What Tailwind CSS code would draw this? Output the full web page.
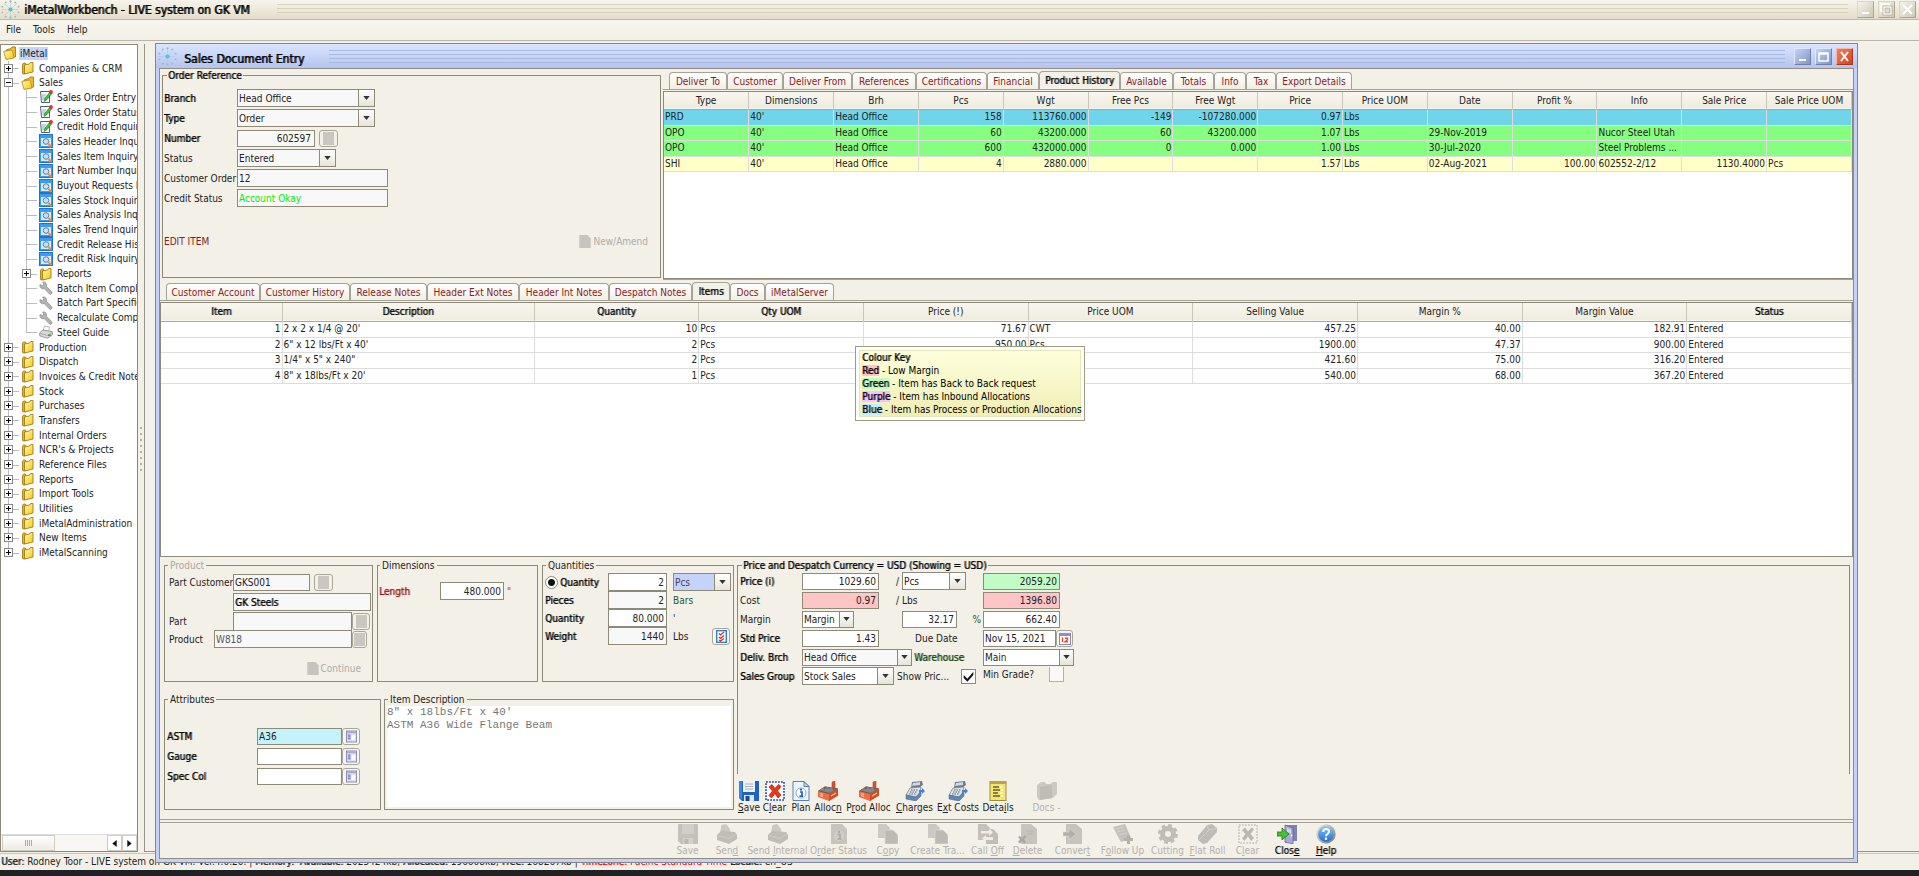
<!DOCTYPE html>
<html lang="en">
<head>
<meta charset="utf-8">
<title>iMetalWorkbench - LIVE system on GK VM</title>
<script src="https://cdn.jsdelivr.net/npm/@tailwindcss/browser@4"></script>
</head>
<body class="bg-[#f3f0e8] text-[#222] text-[10px] leading-[13px] font-['DejaVu_Sans_Condensed','DejaVu_Sans',sans-serif]">
<svg class="absolute size-0" aria-hidden="true">
  <defs>
    <linearGradient id="gFold" x1="0" y1="0" x2="1" y2="1"><stop offset="0" stop-color="#fffbb0"/><stop offset="1" stop-color="#f5c518"/></linearGradient>
    <linearGradient id="gBlue" x1="0" y1="0" x2="0" y2="1"><stop offset="0" stop-color="#8cc4f8"/><stop offset="1" stop-color="#1c6fd6"/></linearGradient>
    <linearGradient id="gRing" x1="0" y1="0" x2="1" y2="1"><stop offset="0" stop-color="#eee"/><stop offset="1" stop-color="#777"/></linearGradient>
  </defs>
  <symbol id="flake" viewBox="0 0 20 20"><g stroke="#9fd2e6" stroke-width="1" stroke-dasharray="2 1" fill="none"><path d="M10 1v18M1 10h18M3.500 3.500l13 13M16.500 3.500l-13 13"/></g><circle cx="10" cy="10" r="2.200" fill="#4fc3dc"/><g fill="#9fb6c6"><circle cx="10" cy="1.500" r="1.200"/><circle cx="10" cy="18.500" r="1.200"/><circle cx="1.500" cy="7" r="1"/><circle cx="18.500" cy="7" r="1"/><circle cx="1.500" cy="13" r="1"/><circle cx="18.500" cy="13" r="1"/><circle cx="5" cy="2.500" r="1"/><circle cx="15" cy="2.500" r="1"/><circle cx="5" cy="17.500" r="1"/><circle cx="15" cy="17.500" r="1"/></g></symbol>
  <symbol id="folder" viewBox="0 0 14 14"><path d="M1.500 3.500l1-1.500h2l.5 1v9.500l-3 .5-.5-1z" fill="#e9b21c" stroke="#9b7412" stroke-width=".8"/><path d="M3.500 4l5-1 1-1.500h2.500v9.500l-8.500 2z" fill="url(#gFold)" stroke="#a67c10" stroke-width=".9"/></symbol>
  <symbol id="folderOpen" viewBox="0 0 14 14"><path d="M3 4l5-1.500 1-1.500h3.500v10l-9 2z" fill="#f0bd2a" stroke="#a67c10" stroke-width=".9"/><path d="M.7 5.500l8-1.500.8 1.500L11 12l-8 1.500z" fill="url(#gFold)" stroke="#b58a12" stroke-width=".8"/></symbol>
  <symbol id="edit" viewBox="0 0 14 14"><path d="M1.500 1.500h9v11h-8z" fill="#fff" stroke="#555c70" stroke-width="1"/><path d="M3 5h4M3 7h3M3 9h3" stroke="#8aa4d8"/><path d="M5 11.500l1-3.500 5-6 2 1.500-5 6z" fill="#3fc23a" stroke="#187a1a" stroke-width=".6"/><circle cx="12" cy="2" r="1.900" fill="#e23030"/></symbol>
  <symbol id="inq" viewBox="0 0 14 14"><rect x=".5" y=".5" width="13" height="13" fill="#3b9cf5" stroke="#1a74d0"/><rect x="2" y="4" width="10" height="8" fill="#dcebfa"/><circle cx="7" cy="7.500" r="2.800" fill="#bfe0ff" stroke="#6d7d8c"/><path d="M9.500 10l3 3" stroke="#f08a3a" stroke-width="2"/></symbol>
  <symbol id="wrench" viewBox="0 0 14 14"><path d="M1 3.500A3.300 3.300 0 0 0 5.300 7.600l5 5.200a1.500 1.500 0 0 0 2.300-2.200L7.400 5.500A3.300 3.300 0 0 0 3.600 1L5 3 3.500 4.700z" fill="#b3b3b3" stroke="#888" stroke-width=".7"/></symbol>
  <symbol id="printerS" viewBox="0 0 14 14"><path d="M4 6l1.500-5 5 1-1 5z" fill="#fff" stroke="#999" stroke-width=".7"/><path d="M.7 8l3-3 9.600 1.500v3.500l-5 3.300-7.600-2.500z" fill="#d8d8d8" stroke="#888" stroke-width=".8"/><path d="M1 8.500l7.500 2 4.500-3.500" fill="none" stroke="#999" stroke-width=".7"/><rect x="9" y="9.500" width="3" height="1.500" fill="#45a04b"/></symbol>
  <symbol id="arrow" viewBox="0 0 8 5"><path d="M0 0h8L4 5z" fill="#333"/></symbol>
  <symbol id="doc" viewBox="0 0 14 16"><path d="M0 0h10l4 4v12H0z" fill="currentColor"/></symbol>
  <symbol id="list" viewBox="0 0 12 13"><rect x=".5" y=".5" width="11" height="12" fill="#dfe0f2" stroke="#8586b8"/><rect x="1" y="1" width="10" height="2" fill="#a9aad4"/><path d="M2 5h3M2 7h3M2 9h3" stroke="#5658a0"/><path d="M6 5h4v5H6z" fill="#fff"/></symbol>
  <symbol id="save" viewBox="0 0 20 20"><path d="M0 0h20v20H3l-3-3z" fill="#1d63c4"/><path d="M0 0h3v18L0 17z" fill="#3c85e0"/><rect x="4" y="0" width="12" height="11" fill="#eef1f6"/><path d="M6 3h8M6 5.500h8M6 8h8" stroke="#a9b2c4"/><rect x="5" y="14" width="10" height="6" fill="#dfe6f0"/><rect x="6.500" y="15" width="4" height="5" fill="#174b9a"/></symbol>
  <symbol id="saveG" viewBox="0 0 20 20"><path d="M0 1q0-1 1-1h18q1 0 1 1v18q0 1-1 1H3l-3-3z" fill="#c3c1ba"/><rect x="4" y="0" width="12" height="10" fill="#d0cec7"/><path d="M5 14h10v6H5z" fill="#d3d1ca"/><rect x="6.500" y="15" width="4" height="5" fill="#b9b7b0"/></symbol>
  <symbol id="clear" viewBox="0 0 20 20"><rect x="1" y="1" width="18" height="18" fill="#f7f8ff" stroke="#24479c" stroke-width="1.600" stroke-dasharray="1.800 1.200"/><path d="M4 6l3-2.500 3 4 3.500-4 2.500 2-3.500 4.500 3.500 4-3 3-3-4.500-3.500 4.500-2.500-2.500L7.500 10z" fill="#e8381c" stroke="#a51d08" stroke-width=".7"/></symbol>
  <symbol id="clearG" viewBox="0 0 20 20"><rect x="1" y="1" width="18" height="18" fill="none" stroke="#c6c4bd" stroke-width="1.600" stroke-dasharray="1.800 1.200"/><path d="M4 6l3-2.500 3 4 3.500-4 2.500 2-3.500 4.500 3.500 4-3 3-3-4.500-3.500 4.500-2.500-2.500L7.500 10z" fill="#bab8b1"/></symbol>
  <symbol id="plan" viewBox="0 0 20 20"><path d="M2 .5h11l5 5v14H2z" fill="#eef4fd" stroke="#5d7fb8"/><path d="M13 .5v5h5z" fill="#c2d6f3" stroke="#5d7fb8"/><circle cx="10" cy="12" r="5" fill="#fff" stroke="#8ea6cc"/><path d="M9 11h2v4M8.500 15.200h3.500" stroke="#1766d2" stroke-width="1.700" fill="none"/><circle cx="10" cy="8.700" r="1.100" fill="#1766d2"/></symbol>
  <symbol id="factory" viewBox="0 0 20 20"><path d="M14 10V1l3-.8V9z" fill="#e0512f" stroke="#9a3219" stroke-width=".5"/><path d="M0 10l7-4.500 13 2v7l-9 5.500L0 16z" fill="#f06a42"/><path d="M0 10l7-4.500 13 2L11 13z" fill="#5c5c5c"/><path d="M2 9.500l3-3 1.500 2L9 5.500l2 2.500 3-2.500 1 3 3.500-.5-7 4z" fill="#868686"/><path d="M11 13l9-5.500v7L11 20z" fill="#d84a26"/><path d="M2 12.500l3 .8M2 14.500l3 .8M13 15l5-3" stroke="#ffc9b5" stroke-width="1.200"/></symbol>
  <symbol id="till" viewBox="0 0 20 20"><path d="M7 1l10-1 1 4-3 2-9 1z" fill="#707a88"/><path d="M8 2l7-1v3l-8 1z" fill="#cfd8e2"/><path d="M5 7l11-1-2 8-4 2-9-2z" fill="#dfe4ea" stroke="#6b7480" stroke-width=".7"/><path d="M6 9h7M5 11h7M4 13h7" stroke="#59636f" stroke-width="1.200" stroke-dasharray="1.500 1"/><path d="M1 14l10 2 5-6v5l-5 5-10-2z" fill="#5f86b5" stroke="#3c5f8c" stroke-width=".5"/><path d="M14 9h3V7l3 3-3 3v-2h-3z" fill="#3a83e8"/></symbol>
  <symbol id="note" viewBox="0 0 20 20"><rect x="2" y=".5" width="16" height="19" fill="#f4e476" stroke="#a08e35"/><rect x="2" y="0" width="16" height="3" fill="#b9a546"/><path d="M5 6h6M5 9h7M5 12h5M5 15h7" stroke="#5f5f2c" stroke-width="1.300"/><path d="M12 6h3M13 9h2M12 12h3M13 15h2" stroke="#fffbd0" stroke-width="1.300"/></symbol>
  <symbol id="foldG" viewBox="0 0 20 20"><path d="M0 4l4-3h4l1 2h4l3-2h4v12l-4 4-14 2-2-3z" fill="#cbc9c2"/><path d="M3 6l12-2v13L3 19z" fill="#bfbdb6"/></symbol>
  <symbol id="printG" viewBox="0 0 20 20"><path d="M3 9l1.500-8L9 0l4 5 .5 4z" fill="#cbc9c2"/><path d="M0 11l4-4 14 1 2 3v4l-8 5-12-4z" fill="#bfbdb6"/><path d="M1 11.500l11 3 7-4.500" fill="none" stroke="#d2d0c9" stroke-width=".8"/></symbol>
  <symbol id="orderG" viewBox="0 0 20 20"><path d="M2 0h11l5 5v15H2z" fill="#c6c4bd"/><circle cx="10" cy="12" r="5" fill="#cfcdc6"/><path d="M8.500 10.500H11V15M8.500 15h4" stroke="#aaa8a1" stroke-width="1.600" fill="none"/><circle cx="10" cy="8" r="1.200" fill="#aaa8a1"/></symbol>
  <symbol id="copyG" viewBox="0 0 20 20"><path d="M0 0h8l4 4v10H0z" fill="#cbc9c2"/><path d="M7 6h8l5 5v9H7z" fill="#bcbab3" stroke="#dddbd3" stroke-width=".7"/></symbol>
  <symbol id="callG" viewBox="0 0 20 20"><path d="M0 0h8l4 4v12H0z" fill="#c4c2bb"/><path d="M8 5h7l5 5v10H8z" fill="#c0beb7"/><path d="M3 7h8V4.500l4 3.700-4 3.700V9.500H3zM15 13H8v-2l-4 3.500 4 3.500v-2h7z" fill="#eeece4"/></symbol>
  <symbol id="delG" viewBox="0 0 20 20"><path d="M3 0h10l6 5v15H3z" fill="#c6c4bd"/><path d="M0 13l2-1 2 2 3-3 1.500 1.500L6 15.500 8 18l-2 1.500L4 17l-2 2.500L0 18l2-2.500z" fill="#a9a7a0"/><path d="M8 7h7M9 10h6" stroke="#b6b4ad"/></symbol>
  <symbol id="convG" viewBox="0 0 20 20"><path d="M3 0h10l6 5v15H3z" fill="#c6c4bd"/><path d="M0 8h6V4l7 6-7 6v-4H0z" fill="#b0aea7" stroke="#d9d7cf" stroke-width=".7"/></symbol>
  <symbol id="followG" viewBox="0 0 20 20"><path d="M0 3L12 0l6 14-10 4z" fill="#c3c1ba"/><path d="M3 5l8-2M4 8l8-2M6 11l7-2" stroke="#d6d4cd"/><path d="M14 11h3v3h3v3h-3v3h-3v-3h-3v-3h3z" fill="#b3b1aa"/></symbol>
  <symbol id="gearG" viewBox="0 0 20 20"><circle cx="10" cy="10" r="5.500" fill="none" stroke="#bfbdb6" stroke-width="5"/><circle cx="10" cy="10" r="8.500" fill="none" stroke="#bfbdb6" stroke-width="3" stroke-dasharray="3.700 2.970"/></symbol>
  <symbol id="rollG" viewBox="0 0 20 20"><path d="M0 12L9 1l5-1 5 4v4L9 19l-4 1-5-4z" fill="#bdbbb4"/><path d="M9 1l2 5L1 16" fill="none" stroke="#d0cec7"/><path d="M11 6l8-2" stroke="#d0cec7"/></symbol>
  <symbol id="close" viewBox="0 0 20 20"><path d="M8 1h12v16h-3L8 19z" fill="#8080b4"/><path d="M8 1l8 3v16l-8-2z" fill="#a9a9d8" stroke="#60608f" stroke-width=".7"/><path d="M10 4l4 1.500v4L10 8z" fill="#d6d6f4"/><circle cx="14.500" cy="11.500" r="1" fill="#fff"/><path d="M0 8h5V4l7 6-7 6v-4H0z" fill="#44c234" stroke="#1c7a16" stroke-width=".8"/></symbol>
  <symbol id="help" viewBox="0 0 20 20"><circle cx="10" cy="10" r="9.700" fill="url(#gRing)"/><circle cx="10" cy="10" r="7.800" fill="url(#gBlue)"/><path d="M7.200 8q0-3 2.900-3t2.900 2.500q0 1.500-1.500 2.300T10 12.300" fill="none" stroke="#fff" stroke-width="2"/><circle cx="10" cy="14.700" r="1.300" fill="#fff"/></symbol>
  <symbol id="check" viewBox="0 0 14 14"><path d="M2.500 5.500L6 9l5.500-6.500v3L6 12 2.500 8.500z" fill="#111"/></symbol>
</svg>

<div class="h-screen flex flex-col relative overflow-hidden">
  <header class="h-[20px] shrink-0 flex items-center gap-[4px] pl-px pr-[3px] bg-linear-to-b from-[#f6f4ec] to-[#e4dec9] border-b border-[#bdb9aa]">
    <svg class="size-[19px]"><use href="#flake"/></svg>
    <h1 class="text-[12px] leading-[18px] text-black [text-shadow:1px_0_#000c] w-[249px] whitespace-nowrap">iMetalWorkbench - LIVE system on GK VM</h1>
    <div class="flex-1 h-[12px] mr-[5px] bg-[repeating-linear-gradient(to_bottom,#d6d1bf_0_1px,transparent_1px_4px)]"></div>
    <button class="size-[17px] border border-[#d9d5c4] border-r-[#aaa68f] border-b-[#aaa68f] bg-linear-to-br from-[#f5f3ea] to-[#cdc8b6]" aria-label="Minimize"><svg viewBox="0 0 15 15"><path d="M4 11h7" stroke="#fff" stroke-width="2"/></svg></button>
    <button class="size-[17px] border border-[#d9d5c4] border-r-[#aaa68f] border-b-[#aaa68f] bg-linear-to-br from-[#f5f3ea] to-[#cdc8b6]" aria-label="Restore"><svg viewBox="0 0 15 15" fill="none" stroke="#fff" stroke-width="1.500"><path d="M4 9H2V2h8v2"/><rect x="5" y="5" width="7" height="7" stroke="#8e8a78" stroke-width="2.500"/><rect x="5" y="5" width="7" height="7"/></svg></button>
    <button class="size-[17px] border border-[#d9d5c4] border-r-[#aaa68f] border-b-[#aaa68f] bg-linear-to-br from-[#f5f3ea] to-[#cdc8b6]" aria-label="Close"><svg viewBox="0 0 15 15"><path d="M3 3l9 9M12 3l-9 9" stroke="#fff" stroke-width="2"/></svg></button>
  </header>
  <nav class="h-[21px] shrink-0 flex items-center gap-[12px] pl-[6px] pb-[2px] border-b border-[#b9b6ab] bg-linear-to-b from-[#f7f5ec] to-[#f3f0e8]">
    <button>File</button><button>Tools</button><button>Help</button>
  </nav>

  <div class="flex-1 min-h-0 flex pt-[3px]">
    <aside class="w-[138px] shrink-0 mb-px border border-[#8d8a78] bg-white flex flex-col overflow-hidden">
      <ul id="tree" class="h-[514px] mt-px grid auto-rows-fr whitespace-nowrap"></ul>
      <div class="mt-auto h-[17px] flex bg-[#f8f7f3] border-t border-[#ddd]">
        <div class="w-[53px] ml-px border border-[#cfccc0] bg-linear-to-b from-white to-[#ecebe4] flex items-center justify-center gap-px"><i class="w-px h-[6px] bg-[#aaa]"></i><i class="w-px h-[6px] bg-[#aaa]"></i><i class="w-px h-[6px] bg-[#aaa]"></i><i class="w-px h-[6px] bg-[#aaa]"></i></div>
        <button class="ml-auto w-[15px] border border-[#cfccc0] bg-white flex items-center justify-center" aria-label="Scroll left"><svg viewBox="0 0 5 8" class="h-[7px] w-[5px]"><path d="M5 0v8L0 4z" fill="#111"/></svg></button>
        <button class="w-[15px] border border-[#cfccc0] bg-white flex items-center justify-center" aria-label="Scroll right"><svg viewBox="0 0 5 8" class="h-[7px] w-[5px]"><path d="M0 0v8l5-4z" fill="#111"/></svg></button>
      </div>
    </aside>
    <div class="w-[6px] shrink-0 flex flex-col items-center justify-center gap-[4px]">
      <i class="size-[2px] bg-[#b5b2a6]"></i><i class="size-[2px] bg-[#b5b2a6]"></i><i class="size-[2px] bg-[#b5b2a6]"></i><i class="size-[2px] bg-[#b5b2a6]"></i><i class="size-[2px] bg-[#b5b2a6]"></i><i class="size-[2px] bg-[#b5b2a6]"></i><i class="size-[2px] bg-[#b5b2a6]"></i><i class="size-[2px] bg-[#b5b2a6]"></i>
    </div>
    <div class="flex-1 mb-px border-l border-b border-[#96948a]"></div>
  </div>

  <footer class="h-[17px] shrink-0 pl-px pt-px whitespace-pre border-t border-[#c9c6bb] bg-[#f3f0e8]"><b class="font-normal [text-shadow:1px_0_#0009]">User:</b> Rodney Toor - LIVE system on GK VM. Ver.4.0.20. | <b class="font-normal [text-shadow:1px_0_#0009]">Memory:</b>  <b class="font-normal [text-shadow:1px_0_#0009]">Available:</b> 2025424kb, <b class="font-normal [text-shadow:1px_0_#0009]">Allocated:</b> 196608kb, <b class="font-normal [text-shadow:1px_0_#0009]">Free:</b> 168267kb | <span class="text-[#f00]"><b class="font-normal [text-shadow:1px_0_#f009]">Timezone:</b> Pacific Standard Time</span> <b class="font-normal [text-shadow:1px_0_#0009]">Locale:</b> en_US</footer>
  <div class="h-[6px] shrink-0 bg-[#202124]"></div>

  <!-- Sales Document Entry window -->
  <main class="absolute left-[155px] right-[61px] top-[43px] bottom-[13px] flex flex-col border border-[#858590] bg-[#c3d0f8] px-[3px] pb-[3px]">
    <div class="h-[24px] shrink-0 flex items-center gap-[4px] pl-[2px] pr-[4px] -mx-[3px] bg-linear-to-b from-[#dbe5ff] to-[#b4c4ef]">
      <svg class="size-[19px]"><use href="#flake"/></svg>
      <h2 class="pl-[3px] pt-[6px] text-[12px] leading-[16px] text-black [text-shadow:1px_0_#000c] w-[144px] whitespace-nowrap">Sales Document Entry</h2>
      <div class="flex-1 h-[13px] mr-[5px] bg-[repeating-linear-gradient(to_bottom,#a9badf_0_1px,transparent_1px_4px)]"></div>
      <button class="size-[17px] border border-[#dfe7ff] border-r-[#6f7fa8] border-b-[#6f7fa8] bg-linear-to-br from-[#c5d2f5] to-[#8395c3]" aria-label="Minimize window"><svg viewBox="0 0 15 15"><path d="M4 11h7" stroke="#fff" stroke-width="2"/></svg></button>
      <button class="size-[17px] border border-[#dfe7ff] border-r-[#6f7fa8] border-b-[#6f7fa8] bg-linear-to-br from-[#c5d2f5] to-[#8395c3]" aria-label="Maximize window"><svg viewBox="0 0 15 15"><path d="M3 4h9v8H3zM3 5h9" fill="none" stroke="#fff" stroke-width="1.500"/></svg></button>
      <button class="size-[17px] border border-[#f3b9a6] border-r-[#a8381c] border-b-[#a8381c] bg-linear-to-br from-[#f08060] to-[#d83c14]" aria-label="Close window"><svg viewBox="0 0 15 15"><path d="M4 3l7 9M11 3l-7 9" stroke="#fff" stroke-width="2"/></svg></button>
    </div>

    <div class="flex-1 min-h-0 flex flex-col border border-[#918e80] bg-[#f3f0e8]">
      <div class="h-[211px] shrink-0 flex gap-[2px] pl-[2px]">
        <fieldset class="w-[499px] h-[209px] shrink-0 border border-[#8d8a78] px-px">
          <legend class="ml-[3px] px-px text-black [text-shadow:1px_0_#0009]">Order Reference</legend>
          <div class="pt-[7px] flex flex-col gap-[2px]">
            <div class="flex items-center h-[18px]"><label for="branch" class="w-[73px] text-black [text-shadow:1px_0_#0009]">Branch</label>
              <div class="relative w-[138px] h-[18px]"><select id="branch" class="appearance-none w-full h-full border border-[#8d8a78] bg-[#f8f8f8] pl-px pr-[18px]"><option>Head Office</option></select><span class="absolute right-px top-px bottom-px w-[16px] border-l border-[#8d8a78] bg-linear-to-b from-white to-[#e6e4da] flex items-center justify-center pointer-events-none"><svg class="w-[7px] h-[4px]"><use href="#arrow"/></svg></span></div></div>
            <div class="flex items-center h-[18px]"><label for="type" class="w-[73px] text-black [text-shadow:1px_0_#0009]">Type</label>
              <div class="relative w-[138px] h-[18px]"><select id="type" class="appearance-none w-full h-full border border-[#8d8a78] bg-[#f8f8f8] pl-px pr-[18px]"><option>Order</option></select><span class="absolute right-px top-px bottom-px w-[16px] border-l border-[#8d8a78] bg-linear-to-b from-white to-[#e6e4da] flex items-center justify-center pointer-events-none"><svg class="w-[7px] h-[4px]"><use href="#arrow"/></svg></span></div></div>
            <div class="flex items-center h-[18px]"><label for="number" class="w-[73px] text-black [text-shadow:1px_0_#0009]">Number</label>
              <input id="number" value="602597" class="w-[78px] h-[17px] border border-[#8d8a78] bg-[#f8f8f8] text-right pr-[3px]">
              <button class="ml-[4px] w-[19px] h-[17px] rounded-[3px] border border-[#a9a698] text-[#c9c7c0] flex items-center justify-center" aria-label="Find order"><svg viewBox="0 0 11 13" class="w-[11px] h-[13px]"><rect width="11" height="13" fill="currentColor"/></svg></button></div>
            <div class="flex items-center h-[18px]"><label for="status" class="w-[73px]">Status</label>
              <div class="relative w-[99px] h-[18px]"><select id="status" class="appearance-none w-full h-full border border-[#8d8a78] bg-[#f8f8f8] pl-px pr-[18px]"><option>Entered</option></select><span class="absolute right-px top-px bottom-px w-[16px] border-l border-[#8d8a78] bg-linear-to-b from-white to-[#e6e4da] flex items-center justify-center pointer-events-none"><svg class="w-[7px] h-[4px]"><use href="#arrow"/></svg></span></div></div>
            <div class="flex items-center h-[18px]"><label for="custorder" class="w-[73px] whitespace-nowrap">Customer Order</label>
              <input id="custorder" value="12" class="w-[151px] h-[18px] border border-[#8d8a78] bg-[#f8f8f8] pl-px"></div>
            <div class="flex items-center h-[18px]"><label for="credit" class="w-[73px]">Credit Status</label>
              <input id="credit" value="Account Okay" class="w-[151px] h-[18px] border border-[#8d8a78] bg-[#f8f8f8] pl-px text-[#00f000]"></div>
          </div>
          <div class="flex items-center justify-between pt-[28px] pr-[11px]">
            <span class="text-[#8b1a1a]">EDIT ITEM</span>
            <button class="flex items-center gap-[2px] text-[#aeaca5]" disabled><svg class="w-[12px] h-[13px] text-[#c6c4bd]"><use href="#doc"/></svg>New/Amend</button>
          </div>
        </fieldset>

        <section class="flex-1 min-w-0 flex flex-col pt-[2px]">
          <div id="topTabs" role="tablist" class="h-[18px] shrink-0 flex items-end pl-[6px] whitespace-nowrap"></div>
          <div class="flex-1 border-y border-[#a5a398] pt-px">
            <div class="h-full border border-t border-[#8d8a78] bg-white">
              <table class="w-full table-fixed border-collapse whitespace-nowrap">
                <thead id="histHead" class="h-[17px] bg-linear-to-b from-[#f8f6ef] to-[#efecdf] border-b border-[#aaa89c]"></thead>
                <tbody id="histBody"></tbody>
              </table>
            </div>
          </div>
        </section>
      </div>

      <div id="midTabs" role="tablist" class="h-[20px] shrink-0 flex items-end pl-[6px] whitespace-nowrap"></div>

      <section class="relative flex-1 min-h-0 border-t border-[#a5a398] pt-px">
        <div class="h-full border border-[#8d8a78] bg-white">
          <table class="w-full table-fixed border-collapse whitespace-nowrap">
            <colgroup><col class="w-[121px]"><col class="w-[252px]"><col span="8"></colgroup>
            <thead id="itemHead" class="h-[18px] bg-linear-to-b from-[#f8f6ef] to-[#efecdf] border-b border-[#aaa89c]"></thead>
            <tbody id="itemBody"></tbody>
          </table>
        </div>
        <div role="tooltip" class="absolute left-[695px] top-[45px] border border-[#9c9e80] bg-white p-[3px] text-black whitespace-nowrap">
          <div class="w-[222px] border border-[#e6e7b8] bg-linear-to-b from-[#feffdc] to-[#f0eeb6] px-[2px]">
            <p class="[text-shadow:1px_0_#0009]">Colour Key</p>
            <p><b class="font-normal [text-shadow:1px_0_#0009] bg-[#ffc4c8]">Red</b> - Low Margin</p>
            <p><b class="font-normal [text-shadow:1px_0_#0009] bg-[#c0fcc4]">Green</b> - Item has Back to Back request</p>
            <p><b class="font-normal [text-shadow:1px_0_#0009] bg-[#f4c4fc]">Purple</b> - Item has Inbound Allocations</p>
            <p><b class="font-normal [text-shadow:1px_0_#0009] bg-[#c4eefc]">Blue</b> - Item has Process or Production Allocations</p>
          </div>
        </div>
      </section>

      <!-- Item detail -->
      <div class="h-[263px] shrink-0 flex gap-[3px] pl-[4px] pr-[3px] pt-[2px] border-b border-[#a5a398]">
        <div class="w-[570px] shrink-0 flex flex-col gap-[11px]">
          <div class="flex gap-[4px]">
            <fieldset class="w-[209px] h-[123px] border border-[#8d8a78] pl-[4px]">
              <legend class="ml-[-1px] px-[2px] text-[#a9a79f]">Product</legend>
              <div class="pt-[2px] flex items-center h-[19px]"><label for="pcust" class="w-[64px] whitespace-nowrap">Part Customer</label><input id="pcust" value="GKS001" class="w-[77px] h-[17px] border border-[#8d8a78] bg-[#f8f8f8] pl-px"><button class="ml-[4px] w-[19px] h-[17px] rounded-[3px] border border-[#a9a698] text-[#c9c7c0] flex items-center justify-center" aria-label="Find customer"><svg viewBox="0 0 11 13" class="w-[11px] h-[13px]"><rect width="11" height="13" fill="currentColor"/></svg></button></div>
              <div class="pl-[64px] pt-[2px]"><input aria-label="Customer name" value="GK Steels" class="block w-[138px] h-[18px] border border-[#8d8a78] bg-[#f8f8f8] pl-px text-black [text-shadow:1px_0_#0009]"></div>
              <div class="pt-px flex items-center h-[19px]"><label for="part" class="w-[64px]">Part</label><input id="part" class="w-[119px] h-[18px] border border-b-0 border-[#8d8a78] bg-[#f8f8f8] pl-px"><button class="w-[18px] h-[17px] rounded-[3px] border border-[#a9a698] text-[#c9c7c0] flex items-center justify-center" aria-label="Find part"><svg viewBox="0 0 11 13" class="w-[11px] h-[13px]"><rect width="11" height="13" fill="currentColor"/></svg></button></div>
              <div class="flex items-center h-[18px]"><label for="prod" class="w-[45px]">Product</label><input id="prod" value="W818" class="w-[138px] h-[18px] border border-[#8d8a78] bg-[#f8f8f8] pl-px text-[#555]"><button class="w-[15px] h-[17px] rounded-[3px] border border-[#a9a698] text-[#c9c7c0] flex items-center justify-center" aria-label="Find product"><svg viewBox="0 0 11 13" class="w-[11px] h-[13px]"><rect width="11" height="13" fill="currentColor"/></svg></button></div>
              <div class="pt-[14px] pr-[11px] flex justify-end"><button class="flex items-center gap-[2px] text-[#aeaca5]" disabled><svg class="w-[12px] h-[13px] text-[#c6c4bd]"><use href="#doc"/></svg>Continue</button></div>
            </fieldset>
            <fieldset class="w-[161px] h-[123px] border border-[#8d8a78] pl-px">
              <legend class="ml-px px-[2px]">Dimensions</legend>
              <div class="pt-[10px] flex items-center"><label for="len" class="w-[61px] text-[#a01010] [text-shadow:1px_0_#a0101099]">Length</label><input id="len" value="480.000" class="w-[64px] h-[18px] border border-[#8d8a78] bg-white text-right pr-[2px]"><span class="pl-[3px] text-[#c33]">"</span></div>
            </fieldset>
            <fieldset class="w-[192px] h-[123px] border border-[#8d8a78] pl-[2px]">
              <legend class="ml-px px-[2px]">Quantities</legend>
              <div class="pt-px flex items-center h-[19px]"><label class="w-[63px] flex items-center gap-[2px] text-black [text-shadow:1px_0_#0009]"><input type="radio" name="q" checked class="appearance-none size-[13px] rounded-full border border-[#8d8a78] bg-[radial-gradient(circle,#111_0_3px,#fff_4px)]">Quantity</label><input aria-label="Quantity ordered" value="2" class="w-[59px] h-[18px] border border-[#8d8a78] bg-white text-right pr-[2px]">
                <div class="relative ml-[6px] w-[58px] h-[18px]"><select aria-label="Quantity unit" class="appearance-none w-full h-full border border-[#8d8a78] bg-[#c5d2fa] pl-px pr-[18px] text-[#445]"><option>Pcs</option></select><span class="absolute right-px top-px bottom-px w-[16px] border-l border-[#8d8a78] bg-linear-to-b from-white to-[#e6e4da] flex items-center justify-center pointer-events-none"><svg class="w-[7px] h-[4px]"><use href="#arrow"/></svg></span></div></div>
              <div class="flex items-center h-[18px]"><label for="pieces" class="w-[63px] text-black [text-shadow:1px_0_#0009]">Pieces</label><input id="pieces" value="2" class="w-[59px] h-[18px] border border-[#8d8a78] bg-[#f8f8f8] text-right pr-[2px]"><span class="pl-[6px] text-[#1f5a1f]">Bars</span></div>
              <div class="flex items-center h-[18px]"><label for="qft" class="w-[63px] text-black [text-shadow:1px_0_#0009]">Quantity</label><input id="qft" value="80.000" class="w-[59px] h-[18px] border border-[#8d8a78] bg-white text-right pr-[2px]"><span class="pl-[6px]">'</span></div>
              <div class="flex items-center h-[18px]"><label for="wt" class="w-[63px] text-black [text-shadow:1px_0_#0009]">Weight</label><input id="wt" value="1440" class="w-[59px] h-[18px] border border-[#8d8a78] bg-[#f8f8f8] text-right pr-[2px]"><span class="pl-[6px]">Lbs</span><button class="ml-auto mr-[3px] w-[18px] h-[17px] rounded-[3px] border border-[#a9a698] bg-[#f6f5ef] flex items-center justify-center" aria-label="Weight checks"><svg viewBox="0 0 11 13" class="w-[11px] h-[13px]"><rect x=".7" y=".7" width="9.600" height="11.600" fill="#fff" stroke="#2f7fd0" stroke-width="1.400"/><path d="M3 3.500l1.500 1.500L8 2M3 7l1.500 1.500L8 5.500M3 10l1.500 1L8 8.500" fill="none" stroke="#e02020" stroke-width="1.200"/></svg></button></div>
            </fieldset>
          </div>
          <div class="flex gap-[3px]">
            <fieldset class="w-[217px] h-[117px] border border-[#8d8a78] pl-[2px]">
              <legend class="ml-px px-[2px]">Attributes</legend>
              <div class="pt-[21px] flex flex-col gap-[2px]">
                <div class="flex items-center h-[18px]"><label for="astm" class="w-[90px] text-black [text-shadow:1px_0_#0009]">ASTM</label><input id="astm" value="A36" class="w-[85px] h-[17px] border border-[#8d8a78] bg-[#c6f2fc] pl-px"><button class="w-[18px] h-[17px] rounded-[3px] border border-[#a9a698] bg-[#f6f5ef] flex items-center justify-center" aria-label="Pick ASTM"><svg class="w-[11px] h-[13px]"><use href="#list"/></svg></button></div>
                <div class="flex items-center h-[18px]"><label for="gauge" class="w-[90px] text-black [text-shadow:1px_0_#0009]">Gauge</label><input id="gauge" class="w-[85px] h-[17px] border border-[#8d8a78] bg-white pl-px"><button class="w-[18px] h-[17px] rounded-[3px] border border-[#a9a698] bg-[#f6f5ef] flex items-center justify-center" aria-label="Pick gauge"><svg class="w-[11px] h-[13px]"><use href="#list"/></svg></button></div>
                <div class="flex items-center h-[18px]"><label for="spec" class="w-[90px] text-black [text-shadow:1px_0_#0009]">Spec Col</label><input id="spec" class="w-[85px] h-[17px] border border-[#8d8a78] bg-white pl-px"><button class="w-[18px] h-[17px] rounded-[3px] border border-[#a9a698] bg-[#f6f5ef] flex items-center justify-center" aria-label="Pick spec colour"><svg class="w-[11px] h-[13px]"><use href="#list"/></svg></button></div>
              </div>
            </fieldset>
            <fieldset class="flex-1 h-[117px] border border-[#8d8a78] px-[2px]">
              <legend class="ml-px px-[2px]">Item Description</legend>
              <textarea aria-label="Item Description" class="block w-full h-[101px] resize-none bg-white font-['Liberation_Mono',monospace] text-[11px] leading-[13px] text-[#777]">8" x 18lbs/Ft x 40'
ASTM A36 Wide Flange Beam</textarea>
            </fieldset>
          </div>
        </div>

        <div class="flex-1 min-w-0 flex flex-col">
          <fieldset class="h-[215px] border border-b-0 border-[#8d8a78] pl-[2px]">
            <legend class="ml-[2px] px-px text-black [text-shadow:1px_0_#0009]">Price and Despatch Currency = USD (Showing = USD)</legend>
            <div class="flex flex-col gap-px whitespace-nowrap">
              <div class="flex items-center h-[18px]"><label for="price" class="w-[62px] text-black [text-shadow:1px_0_#0009]">Price (i)</label><input id="price" value="1029.60" class="w-[77px] h-[17px] border border-[#8d8a78] bg-white text-right pr-[2px]"><span class="w-[23px] text-right pr-[3px]">/</span>
                <div class="relative w-[64px] h-[18px]"><select aria-label="Price unit" class="appearance-none w-full h-full border border-[#8d8a78] bg-white pl-px pr-[18px]"><option>Pcs</option></select><span class="absolute right-px top-px bottom-px w-[16px] border-l border-[#8d8a78] bg-linear-to-b from-white to-[#e6e4da] flex items-center justify-center pointer-events-none"><svg class="w-[7px] h-[4px]"><use href="#arrow"/></svg></span></div>
                <input aria-label="Price total" value="2059.20" class="ml-[17px] w-[77px] h-[17px] border border-[#8d8a78] bg-[#c0fcc4] text-right pr-[2px]"></div>
              <div class="flex items-center h-[18px]"><label for="cost" class="w-[62px]">Cost</label><input id="cost" value="0.97" class="w-[77px] h-[17px] border border-[#8d8a78] bg-[#ffc4c6] text-right pr-[2px]"><span class="w-[23px] text-right pr-[3px]">/</span><span class="w-[81px]">Lbs</span><input aria-label="Cost total" value="1396.80" class="w-[77px] h-[17px] border border-[#8d8a78] bg-[#ffc4c6] text-right pr-[2px]"></div>
              <div class="flex items-center h-[18px]"><label for="margin" class="w-[62px]">Margin</label>
                <div class="relative w-[52px] h-[17px]"><select id="margin" class="appearance-none w-full h-full border border-[#8d8a78] bg-white pl-px"><option>Margin</option></select><span class="absolute right-px top-px bottom-px w-[14px] border-l border-[#8d8a78] bg-linear-to-b from-white to-[#e6e4da] flex items-center justify-center pointer-events-none"><svg class="w-[7px] h-[4px]"><use href="#arrow"/></svg></span></div>
                <input aria-label="Margin percent" value="32.17" class="ml-[48px] w-[55px] h-[17px] border border-[#8d8a78] bg-white text-right pr-[2px]"><span class="w-[26px] pr-[2px] text-right text-[#1f5a1f]">%</span><input aria-label="Margin total" value="662.40" class="w-[77px] h-[17px] border border-[#8d8a78] bg-white text-right pr-[2px]"></div>
              <div class="flex items-center h-[18px]"><label for="std" class="w-[62px] text-black [text-shadow:1px_0_#0009]">Std Price</label><input id="std" value="1.43" class="w-[77px] h-[17px] border border-[#8d8a78] bg-white text-right pr-[2px]"><label for="due" class="w-[104px] pl-[36px]">Due Date</label><input id="due" value="Nov 15, 2021" class="w-[73px] h-[17px] border border-[#8d8a78] bg-white pl-px"><button class="w-[17px] h-[17px] rounded-[3px] border border-[#a9a698] bg-[#f6f5ef] flex items-center justify-center" aria-label="Pick date"><svg viewBox="0 0 12 13" class="w-[12px] h-[13px]"><rect x=".5" y="1.500" width="11" height="11" fill="#fff" stroke="#8a8ab0"/><rect x="1" y="1" width="10" height="3" fill="#8d90c8"/><path d="M3.500 5.500v4.500M6 6.200h2.500v1.500L6 9.700h3" fill="none" stroke="#f04a18" stroke-width="1.400"/></svg></button></div>
              <div class="flex items-center h-[18px]"><label for="deliv" class="w-[62px] text-black [text-shadow:1px_0_#0009]">Deliv. Brch</label>
                <div class="relative w-[110px] h-[17px]"><select id="deliv" class="appearance-none w-full h-full border border-[#8d8a78] bg-[#f8f8f8] pl-px pr-[18px]"><option>Head Office</option></select><span class="absolute right-px top-px bottom-px w-[14px] border-l border-[#8d8a78] bg-linear-to-b from-white to-[#e6e4da] flex items-center justify-center pointer-events-none"><svg class="w-[7px] h-[4px]"><use href="#arrow"/></svg></span></div>
                <label for="wh" class="w-[71px] pl-[2px] text-[#0c450c] [text-shadow:1px_0_#0c450c99]">Warehouse</label>
                <div class="relative w-[91px] h-[17px]"><select id="wh" class="appearance-none w-full h-full border border-[#8d8a78] bg-white pl-px pr-[18px]"><option>Main</option></select><span class="absolute right-px top-px bottom-px w-[14px] border-l border-[#8d8a78] bg-linear-to-b from-white to-[#e6e4da] flex items-center justify-center pointer-events-none"><svg class="w-[7px] h-[4px]"><use href="#arrow"/></svg></span></div></div>
              <div class="flex items-center h-[18px]"><label for="sg" class="w-[62px] text-black [text-shadow:1px_0_#0009]">Sales Group</label>
                <div class="relative w-[92px] h-[18px]"><select id="sg" class="appearance-none w-full h-full border border-[#8d8a78] bg-white pl-px pr-[18px]"><option>Stock Sales</option></select><span class="absolute right-px top-px bottom-px w-[16px] border-l border-[#8d8a78] bg-linear-to-b from-white to-[#e6e4da] flex items-center justify-center pointer-events-none"><svg class="w-[7px] h-[4px]"><use href="#arrow"/></svg></span></div>
                <label for="sp" class="w-[67px] pl-[3px]">Show Pric...</label><span class="relative size-[15px]"><input id="sp" type="checkbox" checked class="block appearance-none size-[15px] border border-[#8d8a78] bg-white"><svg class="absolute inset-0 size-[15px] pointer-events-none"><use href="#check"/></svg></span>
                <span class="flex items-center self-start"><label for="mg" class="w-[73px] pl-[7px]">Min Grade?</label><input id="mg" type="checkbox" class="appearance-none size-[15px] border border-t-0 border-[#b5b2a4] bg-[#faf9f6]"></span></div>
            </div>
          </fieldset>
          <div id="itemBar" class="flex pt-[7px] whitespace-nowrap"></div>
        </div>
      </div>

      <div id="docBar" class="h-[36px] shrink-0 mt-[2px] pt-px border-t border-[#a5a398] flex justify-center whitespace-nowrap"></div>
    </div>
  </main>
</div>

<script>
const $ = id => document.getElementById(id);

/* Navigation tree: [depth, icon, label, expander] */
const inq = ['Sales Header Inquiry','Sales Item Inquiry','Part Number Inquiry','Buyout Requests Inquiry','Sales Stock Inquiry','Sales Analysis Inquiry','Sales Trend Inquiry','Credit Release History','Credit Risk Inquiry'];
const tree = [
  [1,'folder','Companies & CRM','+'],[1,'folderOpen','Sales','-'],
  [2,'edit','Sales Order Entry'],[2,'edit','Sales Order Status'],[2,'edit','Credit Hold Enquiry'],
  ...inq.map(t => [2,'inq',t]),
  [2,'folder','Reports','+'],[2,'wrench','Batch Item Completion'],[2,'wrench','Batch Part Specification'],[2,'wrench','Recalculate Companies'],[2,'printerS','Steel Guide'],
  ...['Production','Dispatch','Invoices & Credit Notes','Stock','Purchases','Transfers','Internal Orders',"NCR's & Projects",'Reference Files','Reports','Import Tools','Utilities','iMetalAdministration','New Items','iMetalScanning'].map(t => [1,'folder',t,'+'])
];
const box = s => '<button class="relative size-[9px] border border-[#888] bg-white" aria-label="Toggle"><i class="absolute left-px right-px top-[3px] h-px bg-black"></i>' + (s === '+' ? '<i class="absolute top-px bottom-px left-[3px] w-px bg-black"></i>' : '') + '</button>';
const cell = (s, last) => '<span class="relative w-[18px] self-stretch flex items-center pl-[3px]"><i class="absolute left-[7px] top-0 w-px bg-[#bbb] ' + (last ? 'h-1/2' : 'h-full') + '"></i>' + (s === 'line' ? '' : '<i class="absolute left-[7px] right-0 top-1/2 h-px bg-[#bbb]"></i>') + (s === '+' || s === '-' ? box(s) : '') + '</span>';
$('tree').innerHTML = '<li class="flex items-center pl-[2px]"><svg class="size-[14px] mr-[2px] shrink-0"><use href="#folderOpen"/></svg><a href="#" class="bg-[#c5d4fb] px-px">iMetal</a></li>' +
  tree.map(([d, ic, t, s], i) => '<li class="flex items-center">' + (d === 2 ? cell('line') + cell(s, t === 'Steel Guide') : cell(s, i === tree.length - 1)) + '<svg class="size-[14px] ml-[2px] mr-[4px] shrink-0"><use href="#' + ic + '"/></svg><a href="#">' + t.replace('&', '&amp;') + '</a></li>').join('');

/* Tab strips */
const tab = on => ([t, w]) => '<button role="tab" class="' + w + ' rounded-t-[4px] border border-b-0 border-[#a5a398] ' + (t === on ? 'h-[18px] bg-[#f3f0e8] text-black [text-shadow:1px_0_#0009]' : 'h-[17px] bg-linear-to-b from-white to-[#f1eee4] text-[#8b1a1a]') + '">' + t + '</button>';
$('topTabs').innerHTML = [['Deliver To','w-[58px]'],['Customer','w-[56px]'],['Deliver From','w-[69px]'],['References','w-[64px]'],['Certifications','w-[71px]'],['Financial','w-[52px]'],['Product History','w-[81px]'],['Available','w-[53px]'],['Totals','w-[41px]'],['Info','w-[32px]'],['Tax','w-[30px]'],['Export Details','w-[76px]']].map(tab('Product History')).join('');
$('midTabs').innerHTML = [['Customer Account','w-[94px]'],['Customer History','w-[90px]'],['Release Notes','w-[77px]'],['Header Ext Notes','w-[92px]'],['Header Int Notes','w-[90px]'],['Despatch Notes','w-[83px]'],['Items','w-[38px]'],['Docs','w-[35px]'],['iMetalServer','w-[69px]']].map(tab('Items')).join('');

/* Tables */
const head = (cols, bold) => '<tr>' + cols.map(c => '<th scope="col" class="font-normal border-r border-[#c9c6ba] ' + (bold.includes(c) ? 'text-black [text-shadow:1px_0_#0009]' : '') + '">' + c + '</th>').join('') + '</tr>';
const body = (rows, right) => rows.map(([bg, ...r]) => '<tr class="h-[16px] even:h-[15px] ' + bg + '">' + r.map((c, i) => '<td class="border-r border-b border-[#dddddd] px-px leading-[14px] overflow-hidden ' + (right.includes(i) ? 'text-right' : '') + '">' + c + '</td>').join('') + '</tr>').join('');
$('histHead').innerHTML = head(['Type','Dimensions','Brh','Pcs','Wgt','Free Pcs','Free Wgt','Price','Price UOM','Date','Profit %','Info','Sale Price','Sale Price UOM'], []);
$('histBody').innerHTML = body([
  ['bg-[#70d5ea]','PRD',"40'",'Head Office','158','113760.000','-149','-107280.000','0.97','Lbs','','','','',''],
  ['bg-[#86ff80]','OPO',"40'",'Head Office','60','43200.000','60','43200.000','1.07','Lbs','29-Nov-2019','','Nucor Steel Utah','',''],
  ['bg-[#86ff80]','OPO',"40'",'Head Office','600','432000.000','0','0.000','1.00','Lbs','30-Jul-2020','','Steel Problems ...','',''],
  ['bg-[#ffffc8]','SHI',"40'",'Head Office','4','2880.000','','','1.57','Lbs','02-Aug-2021','100.00','602552-2/12','1130.4000','Pcs']
], [3,4,5,6,7,10,12]);
$('itemHead').innerHTML = head(['Item','Description','Quantity','Qty UOM','Price (!)','Price UOM','Selling Value','Margin %','Margin Value','Status'], ['Item','Description','Quantity','Qty UOM','Status']);
$('itemBody').innerHTML = body([
  ['bg-white','1',"2 x 2 x 1/4 @ 20'",'10','Pcs','71.67','CWT','457.25','40.00','182.91','Entered'],
  ['bg-white','2',"6\" x 12 lbs/Ft x 40'",'2','Pcs','950.00','Pcs','1900.00','47.37','900.00','Entered'],
  ['bg-white','3','1/4" x 5" x 240"','2','Pcs','','','421.60','75.00','316.20','Entered'],
  ['bg-white','4',"8\" x 18lbs/Ft x 20'",'1','Pcs','','','540.00','68.00','367.20','Entered']
], [0,2,4,6,7,8]);

/* Tool bars: [icon, label with mnemonic, width, state] */
const tool = ([ic, t, w, cls]) => '<button class="shrink-0 flex flex-col items-center ' + w + ' ' + cls + '"><svg class="size-[20px]"><use href="#' + ic + '"/></svg><span>' + t + '</span></button>';
const on = 'text-[#222]', off = 'text-[#b3b1aa]';
$('itemBar').innerHTML = [['save','<u>S</u>ave','w-[24px]',on],['clear','C<u>l</u>ear','w-[27px]',on],['plan','Plan','w-[26px]',on],['factory','Alloc<u>n</u>','w-[28px]',on],['factory','P<u>r</u>od Alloc','w-[53px]',on],['till','<u>C</u>harges','w-[39px]',on],['till','E<u>x</u>t Costs','w-[48px]',on],['note','Deta<u>i</u>ls','w-[32px]',on],['foldG','Docs -','w-[41px] ml-[12px]',off]].map(tool).join('');
$('docBar').innerHTML = [['saveG','Save','w-[40px]',off],['printG','Sen<u>d</u>','w-[39px]',off],['printG','Send <u>I</u>nternal','w-[62px]',off],['orderG','O<u>r</u>der Status','w-[60px]',off],['copyG','C<u>o</u>py','w-[39px]',off],['copyG','Create Tra...','w-[60px]',off],['callG','Call <u>O</u>ff','w-[40px]',off],['delG','<u>D</u>elete','w-[40px]',off],['convG','Conver<u>t</u>','w-[50px]',off],['followG','F<u>o</u>llow Up','w-[50px]',off],['gearG','Cuttin<u>g</u>','w-[40px]',off],['rollG','<u>F</u>lat Roll','w-[40px]',off],['clearG','C<u>l</u>ear','w-[40px]',off],['close','Clos<u>e</u>','w-[39px]','text-black [text-shadow:1px_0_#0006]'],['help','<u>H</u>elp','w-[39px]','text-black [text-shadow:1px_0_#0006]']].map(tool).join('');
</script>
</body>
</html>
